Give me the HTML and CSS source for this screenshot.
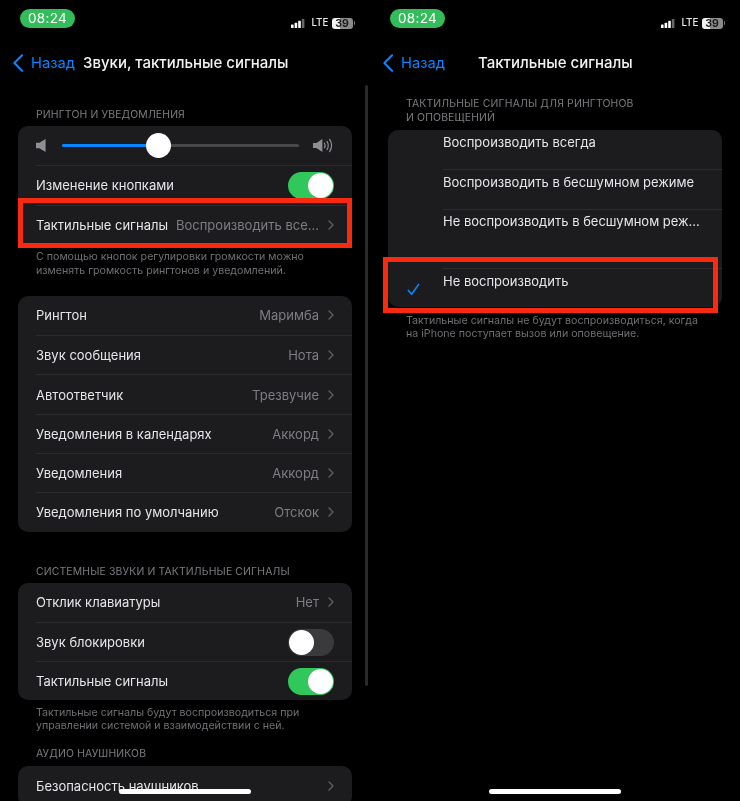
FILE: index.html
```html
<!DOCTYPE html>
<html lang="ru">
<head>
<meta charset="utf-8">
<title>Тактильные сигналы</title>
<link rel="stylesheet" href="styles.css">
</head>
<body>
<svg class="defs" width="0" height="0" aria-hidden="true">
  <symbol id="chev" viewBox="0 0 6 10"><path d="M1 1 5 5 1 9" fill="none" stroke="currentColor" stroke-width="1.4" stroke-linecap="round" stroke-linejoin="round"/></symbol>
  <symbol id="back" viewBox="0 0 12 20"><path d="M10.5 1.5 2 10l8.5 8.5" fill="none" stroke="currentColor" stroke-width="2.3" stroke-linecap="round" stroke-linejoin="round"/></symbol>
  <symbol id="bars" viewBox="0 0 14 9"><rect x="0" y="5.5" width="2.6" height="3.5" rx=".6" fill="#fff"/><rect x="3.6" y="3.8" width="2.6" height="5.2" rx=".6" fill="#fff"/><rect x="7.2" y="1.8" width="2.6" height="7.2" rx=".6" fill="#fff"/><rect x="10.8" y="0" width="2.6" height="9" rx=".6" fill="#666"/></symbol>
</svg>
<main class="screens">
  <section class="phone phone-left">
    <div class="status">
      <span class="pill">08:24</span>
      <div class="status-right">
        <svg class="bars"><use href="#bars"/></svg>
        <span class="lte">LTE</span>
        <span class="battery"><span class="battery-level">39</span></span>
        <span class="battery-cap"></span>
      </div>
    </div>
    <nav class="nav">
      <svg class="back-icon"><use href="#back"/></svg>
      <span class="back-label">Назад</span>
      <span class="nav-title">Звуки, тактильные сигналы</span>
    </nav>
    <div class="scroll-track"></div>

    <h2 class="label label-first">РИНГТОН И УВЕДОМЛЕНИЯ</h2>
    <div class="card">
      <div class="row slider-row">
        <svg class="vol-low" viewBox="0 0 10 13"><path d="M0 3.8h3.4L9.6 0v13L3.4 9.2H0z" fill="#8e8e93"/></svg>
        <div class="track"><div class="track-fill"></div><div class="thumb"></div></div>
        <svg class="vol-high" viewBox="0 0 21 15"><path d="M0 5h3.4L9.4 1v13L3.4 10H0z" fill="#8e8e93"/><g fill="none" stroke="#8e8e93" stroke-width="1.2" stroke-linecap="round"><path d="M11.5 5.2q1.4 2.3 0 4.6"/><path d="M14 3.4q2.6 4.1 0 8.2"/><path d="M16.6 1.4q4 6.1 0 12.2"/></g></svg>
      </div>
      <div class="row"><span class="row-title">Изменение кнопками</span><span class="switch on"></span></div>
      <div class="row"><span class="row-title">Тактильные сигналы</span><span class="row-value">Воспроизводить все...</span><svg class="chev"><use href="#chev"/></svg></div>
    </div>
    <p class="note note-first">С помощью кнопок регулировки громкости можно<br>изменять громкость рингтонов и уведомлений.</p>

    <div class="card card-tones">
      <div class="row"><span class="row-title">Рингтон</span><span class="row-value">Маримба</span><svg class="chev"><use href="#chev"/></svg></div>
      <div class="row"><span class="row-title">Звук сообщения</span><span class="row-value">Нота</span><svg class="chev"><use href="#chev"/></svg></div>
      <div class="row"><span class="row-title">Автоответчик</span><span class="row-value">Трезвучие</span><svg class="chev"><use href="#chev"/></svg></div>
      <div class="row"><span class="row-title">Уведомления в календарях</span><span class="row-value">Аккорд</span><svg class="chev"><use href="#chev"/></svg></div>
      <div class="row"><span class="row-title">Уведомления</span><span class="row-value">Аккорд</span><svg class="chev"><use href="#chev"/></svg></div>
      <div class="row"><span class="row-title">Уведомления по умолчанию</span><span class="row-value">Отскок</span><svg class="chev"><use href="#chev"/></svg></div>
    </div>

    <h2 class="label label-system">СИСТЕМНЫЕ ЗВУКИ И ТАКТИЛЬНЫЕ СИГНАЛЫ</h2>
    <div class="card">
      <div class="row"><span class="row-title">Отклик клавиатуры</span><span class="row-value">Нет</span><svg class="chev"><use href="#chev"/></svg></div>
      <div class="row"><span class="row-title">Звук блокировки</span><span class="switch"></span></div>
      <div class="row"><span class="row-title">Тактильные сигналы</span><span class="switch on"></span></div>
    </div>
    <p class="note note-system">Тактильные сигналы будут воспроизводиться при<br>управлении системой и взаимодействии с ней.</p>
    <h2 class="label label-audio">АУДИО НАУШНИКОВ</h2>
    <div class="card">
      <div class="row"><span class="row-title">Безопасность наушников</span><svg class="chev"><use href="#chev"/></svg></div>
    </div>

    <div class="marker marker-left"></div>
    <div class="home"></div>
  </section>

  <section class="phone phone-right">
    <div class="status">
      <span class="pill">08:24</span>
      <div class="status-right">
        <svg class="bars"><use href="#bars"/></svg>
        <span class="lte">LTE</span>
        <span class="battery"><span class="battery-level">39</span></span>
        <span class="battery-cap"></span>
      </div>
    </div>
    <nav class="nav">
      <svg class="back-icon"><use href="#back"/></svg>
      <span class="back-label">Назад</span>
      <span class="nav-title nav-title-center">Тактильные сигналы</span>
    </nav>

    <h2 class="label label-two">ТАКТИЛЬНЫЕ СИГНАЛЫ ДЛЯ РИНГТОНОВ<br>И ОПОВЕЩЕНИЙ</h2>
    <div class="card card-options">
      <div class="option"><span class="row-title">Воспроизводить всегда</span></div>
      <div class="option"><span class="row-title">Воспроизводить в бесшумном режиме</span></div>
      <div class="option option-tall"><span class="row-title">Не воспроизводить в бесшумном реж...</span></div>
      <div class="option"><span class="row-title">Не воспроизводить</span>
        <svg class="check" viewBox="0 0 14 14"><path d="M1.5 8 5 12.2 12.5 1.5" fill="none" stroke="#0a84ff" stroke-width="1.8" stroke-linecap="round" stroke-linejoin="round"/></svg>
      </div>
    </div>
    <p class="note note-options">Тактильные сигналы не будут воспроизводиться, когда<br>на iPhone поступает вызов или оповещение.</p>

    <div class="marker marker-right"></div>
    <div class="home"></div>
  </section>
</main>
</body>
</html>
```

FILE: styles.css
```css
* { box-sizing: border-box; }
html, body { margin: 0; padding: 0; background: #000; }
body { width: 740px; height: 801px; overflow: hidden; font-family: Inter, "Liberation Sans", sans-serif; color: #ebebf0; }
.defs { position: absolute; }
.screens { display: flex; width: 740px; height: 801px; filter: blur(.3px); }
.phone { position: relative; width: 370px; height: 801px; overflow: hidden; padding: 0 18px; flex: none; }

.status { display: flex; align-items: center; justify-content: space-between; height: 19px; margin: 9px 0 0 2px; }
.pill { width: 55px; height: 19px; border-radius: 10px; background: #32bd5a; color: #fff; font-size: 13.5px; line-height: 19px; text-align: center; letter-spacing: .3px; }
.status-right { display: flex; align-items: center; height: 14px; margin-top: 9px; margin-right: -3px; }
.bars { width: 14px; height: 9px; margin-right: 7px; }
.lte { font-size: 9.8px; line-height: 12px; color: #e8e8e8; width: 16px; margin-right: 4px; font-weight: 500; }
.battery { display: block; width: 21px; height: 11px; border-radius: 3px; background: linear-gradient(90deg, #f2f2f2 0 39%, #8b8b8b 39%); }
.battery-level { display: block; color: #1a1a1a; font-size: 10.5px; line-height: 11px; font-weight: 700; text-align: center; }
.battery-cap { width: 1.5px; height: 4px; margin-left: 1px; background: #7a7a7a; border-radius: 0 1px 1px 0; }

.nav { display: flex; align-items: center; height: 24px; margin: 23px 0 0 -6px; position: relative; }
.back-icon { width: 12px; height: 18px; color: #0a84ff; flex: none; }
.back-label { margin-left: 7px; font-size: 14.7px; line-height: 24px; color: #0a84ff; width: 44px; flex: none; }
.nav-title { margin-left: 8px; font-size: 15px; line-height: 24px; font-weight: 500; color: #f2f2f2; white-space: nowrap; }
.nav-title-center { margin-left: 33px; }

.label { margin: 0 0 5px 18px; font-size: 10.4px; line-height: 14px; font-weight: 400; letter-spacing: .16px; color: #7b7b80; }
.label-first { margin-top: 33px; margin-bottom: 4px; }
.label-system { margin-top: 33px; margin-bottom: 4px; }
.label-audio { margin-top: 15px; }
.label-two { margin-top: 22px; }

.card { background: #1c1c1e; border-radius: 10px; overflow: hidden; }
.row { display: flex; align-items: center; height: 39.3px; margin-left: 18px; padding-right: 18px; border-top: 1px solid #2c2c2e; }
.row:first-child { border-top: 0; }
.row-title { font-size: 13px; line-height: 18px; color: #e6e6ea; white-space: nowrap; }
.row-value { margin-left: auto; font-size: 13px; line-height: 18px; color: #7d7d82; white-space: nowrap; }
.chev { width: 6px; height: 10px; margin-left: 9px; color: #5e5e62; flex: none; }
.row > .row-title + .chev { margin-left: auto; }

.vol-low { width: 10px; height: 13px; flex: none; }
.track { position: relative; width: 237px; height: 3px; margin-left: 16px; background: #48484a; border-radius: 2px; flex: none; }
.track-fill { width: 96px; height: 3px; background: #0a84ff; border-radius: 2px; }
.thumb { position: absolute; left: 84px; top: -11px; width: 25px; height: 25px; border-radius: 50%; background: #fff; }
.vol-high { width: 21px; height: 15px; margin-left: 14px; flex: none; }

.switch { position: relative; margin-left: auto; width: 46px; height: 27px; border-radius: 14px; background: #3a3a3d; flex: none; }
.switch::after { content: ""; position: absolute; left: 1px; top: 1px; width: 25px; height: 25px; border-radius: 50%; background: #fff; }
.switch.on { background: #30c85a; }
.switch.on::after { left: 20px; }

.note { margin: 7px 0 0 18px; font-size: 10.65px; line-height: 13.2px; color: #6f6f74; white-space: nowrap; }
.note-first { margin-top: 6.5px; }
.note-system { margin-top: 5.5px; }
.note-options { margin-top: 7px; }
.card-tones { margin-top: 19px; }

.card-options { height: 177px; }
.option { position: relative; height: 39.3px; margin-left: 55px; border-top: 1px solid #2c2c2e; }
.option:first-child { border-top: 0; }
.option .row-title { display: block; padding-top: 2.5px; }
.option-tall { height: 59.5px; }
.check { position: absolute; left: -36px; top: 14px; width: 13px; height: 13px; }

.marker { position: absolute; border: 5px solid #fa2a10; pointer-events: none; }
.marker-left { left: 18px; top: 198px; width: 334px; height: 50px; }
.marker-right { left: 13px; top: 257px; width: 335px; height: 56px; }
.scroll-track { position: absolute; left: 365px; top: 85px; width: 3px; height: 601px; background: #2a2a2c; border-radius: 2px; }
.home { position: absolute; left: 119px; top: 789px; width: 132px; height: 5px; border-radius: 3px; background: #fff; }
```
